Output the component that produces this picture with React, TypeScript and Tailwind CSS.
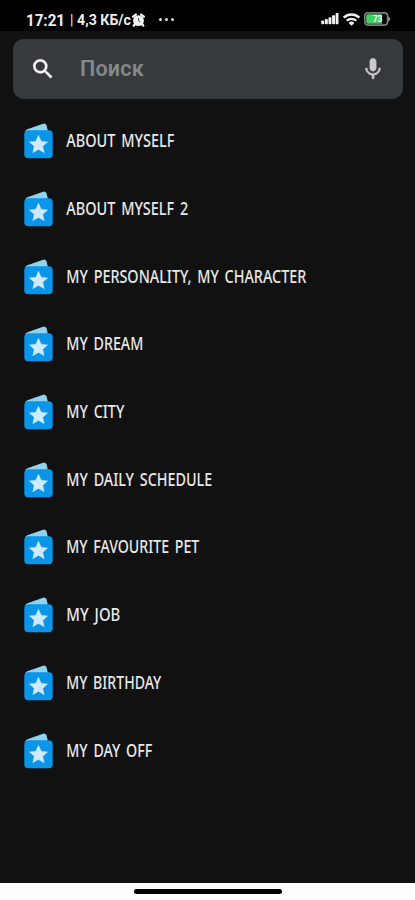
import { FC } from "react";

interface Topic {
    title: string;
    width: number;
}

const TOPICS: Topic[] = [
    { title: "ABOUT MYSELF", width: 108 },
    { title: "ABOUT MYSELF 2", width: 122 },
    { title: "MY PERSONALITY, MY CHARACTER", width: 240 },
    { title: "MY DREAM", width: 77 },
    { title: "MY CITY", width: 58 },
    { title: "MY DAILY SCHEDULE", width: 146 },
    { title: "MY FAVOURITE PET", width: 133 },
    { title: "MY JOB", width: 54 },
    { title: "MY BIRTHDAY", width: 95 },
    { title: "MY DAY OFF", width: 86 },
];

// ICONS

const AlarmIcon: FC = () => (
    <svg className="w-[13px] h-[14px] shrink-0" viewBox="0 0 13 14">
        <circle cx="6.5" cy="7.6" r="5.4" fill="#f2f2f2" />
        <path d="M1.2 3.6 3.8 1.6M11.8 3.6 9.2 1.6M2.8 11.2 1.8 12.6M10.2 11.2 11.2 12.6" stroke="#f2f2f2" strokeWidth="2.4" strokeLinecap="round" />
        <path d="M6.5 5v2.8l1.8.8" stroke="#555" strokeWidth="1" fill="none" />
    </svg>
);

const SignalIcon: FC = () => (
    <svg className="w-[18px] h-[12px] shrink-0" viewBox="0 0 18 12" fill="#f2f2f2">
        <rect x="0.3" y="7.5" width="2.9" height="3.8" rx="0.8" />
        <rect x="3.9" y="6" width="2.9" height="5.3" rx="0.8" />
        <rect x="7.5" y="4.2" width="2.9" height="7.1" rx="0.8" />
        <rect x="11.1" y="2.2" width="2.9" height="9.1" rx="0.8" />
        <rect x="14.6" y="0" width="2.9" height="11.3" rx="0.8" />
    </svg>
);

const WifiIcon: FC = () => (
    <svg className="w-[17px] h-[13px] shrink-0" viewBox="0 0 17 13" fill="none" stroke="#f2f2f2">
        <path d="M0.8 4.6a11 11 0 0 1 15.4 0" strokeWidth="2.6" />
        <path d="M3.7 7.8a6.8 6.8 0 0 1 9.6 0" strokeWidth="2.3" />
        <path d="M8.5 12.8 5.6 10a4.2 4.2 0 0 1 5.8 0Z" fill="#f2f2f2" stroke="none" />
    </svg>
);

const BatteryIcon: FC = () => (
    <svg className="w-[27px] h-[14px] shrink-0" viewBox="0 0 27 14">
        <path d="M23 2.5 26.7 7 23 11.5Z" fill="#8b8b8b" />
        <rect x="0.8" y="0.9" width="22.8" height="12.2" rx="3" fill="#080808" stroke="#7c7c7c" strokeWidth="1.6" />
        <path d="M4 2.3h14v9.4H4A1.8 1.8 0 0 1 2.2 9.9V4.1A1.8 1.8 0 0 1 4 2.3Z" fill="#42cf64" />
        <text x="13.6" y="10.2" textAnchor="middle" fill="#effff2" className="font-['Roboto',sans-serif] text-[8.5px] font-bold">73</text>
    </svg>
);

const SearchIcon: FC = () => (
    <svg className="w-[26px] h-[26px] shrink-0" viewBox="0 0 24 24" fill="#fafafa" stroke="#fafafa" strokeWidth="0.4">
        <path d="M15.5 14h-.79l-.28-.27A6.47 6.47 0 0 0 16 9.5 6.5 6.5 0 1 0 9.5 16c1.61 0 3.09-.59 4.23-1.57l.27.28v.79l5 4.99L20.49 19l-4.99-5zm-6 0C7.01 14 5 11.99 5 9.5S7.01 5 9.5 5 14 7.01 14 9.5 11.99 14 9.5 14z" />
    </svg>
);

const MicIcon: FC = () => (
    <svg className="w-[26px] h-[26px] shrink-0" viewBox="0 0 24 24" fill="#c9cbcc" stroke="#c9cbcc" strokeWidth="0.3">
        <path d="M12 14c1.66 0 3-1.34 3-3V5c0-1.66-1.34-3-3-3S9 3.34 9 5v6c0 1.66 1.34 3 3 3zm5.3-3c0 3-2.54 5.1-5.3 5.1S6.7 14 6.7 11H5c0 3.41 2.72 6.23 6 6.72V21h2v-3.28c3.28-.48 6-3.3 6-6.72h-1.7z" />
    </svg>
);

const CardsIcon: FC = () => (
    <svg className="w-[29px] h-[36px] shrink-0" viewBox="0 0 29 36">
        <path d="M1.2 8.6Q1.4 7 3.4 6.2L18.4.9Q21.4-.1 22.6 2.4L24 8.6Z" fill="#8fd3ee" />
        <rect x="0.3" y="7.3" width="28.4" height="28" rx="4" fill="#0a95e8" />
        <path d="m14.5 12.2 2.7 6 6.4.7-4.8 4.4 1.4 6.4-5.7-3.3-5.7 3.3 1.4-6.4-4.8-4.4 6.4-.7Z" fill="#cfeaff" stroke="#cfeaff" strokeWidth="0.4" strokeLinejoin="round" />
    </svg>
);

const StatusBar: FC = () => (
    <div className="flex h-[31px] items-center bg-black pt-[8px] pl-[26px] pr-[24px] font-['Roboto',sans-serif] text-[#eeeeee]">
        <svg className="h-[20px] w-[106px] shrink-0" fill="#eeeeee">
            <text x="0" y="15.5" textLength="39" lengthAdjust="spacingAndGlyphs" className="text-[16px] font-bold">17:21</text>
            <text x="44" y="14.5" className="text-[14px]">|</text>
            <text x="51" y="15" textLength="54" lengthAdjust="spacingAndGlyphs" className="text-[14.5px] font-bold">4,3 КБ/с</text>
        </svg>
        <AlarmIcon />
        <div className="ml-[14px] flex gap-[3.5px]">
            <span className="size-[2.5px] rounded-full bg-[#dddddd]" />
            <span className="size-[2.5px] rounded-full bg-[#dddddd]" />
            <span className="size-[2.5px] rounded-full bg-[#dddddd]" />
        </div>
        <div className="ml-auto -mt-px flex items-center gap-[4px]">
            <SignalIcon />
            <WifiIcon />
            <BatteryIcon />
        </div>
    </div>
);

const SearchBar: FC = () => (
    <div className="ml-[13px] mr-[12px] mt-[8px] flex h-[60px] shrink-0 items-center rounded-[11px] bg-[#363a3d] px-[17px]">
        <SearchIcon />
        <span className="ml-[24px] font-['Roboto',sans-serif] text-[21.5px] font-semibold tracking-[0.2px] text-[#84898c]">Поиск</span>
        <span className="ml-auto">
            <MicIcon />
        </span>
    </div>
);

const TopicRow: FC<{ topic: Topic }> = ({ topic }) => (
    <li className="flex h-[67.7px] items-center gap-[13px] pl-[24px]">
        <CardsIcon />
        <svg className="h-[28px] w-[320px] overflow-visible">
            <text
                x="0.3"
                y="20"
                fill="#e8e8e8"
                textLength={topic.width}
                lengthAdjust="spacingAndGlyphs"
                className="font-['Noto_Sans',sans-serif] text-[17.5px] font-medium [word-spacing:2.5px]"
            >
                {topic.title}
            </text>
        </svg>
    </li>
);

const App: FC = () => {
    return (
        <div className="flex h-[900px] w-[415px] flex-col overflow-hidden bg-[#111111]">
            <StatusBar />
            <SearchBar />
            <ul className="mt-[8.5px] flex-1">
                {TOPICS.map((topic) => (
                    <TopicRow key={topic.title} topic={topic} />
                ))}
            </ul>
            <div className="flex h-[17px] shrink-0 justify-center bg-[#fdfdfd] pt-[6px]">
                <div className="h-[5px] w-[148px] rounded-full bg-black" />
            </div>
        </div>
    );
};

export default App;
